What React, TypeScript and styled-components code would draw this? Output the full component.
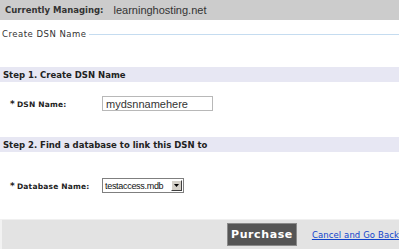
import styled, { createGlobalStyle } from "styled-components";

const GlobalStyle = createGlobalStyle`
  html, body {
    margin: 0;
    padding: 0;
    background: #ffffff;
  }
  body {
    width: 399px;
    height: 249px;
    overflow: hidden;
    font-family: "DejaVu Sans", Verdana, sans-serif;
    color: #222;
  }
`;

const Page = styled.div`
  display: flex;
  flex-direction: column;
  width: 399px;
  height: 249px;
`;

const ManagingBar = styled.div`
  display: flex;
  align-items: center;
  height: 20px;
  padding-left: 5px;
  background: #cccccc;
  font-size: 8.5px;
`;

const ManagingLabel = styled.span`
  font-weight: bold;
  color: #333;
  margin-right: 10px;
`;

const Domain = styled.span`
  font-family: "Liberation Sans", Arial, sans-serif;
  font-size: 11px;
  color: #333;
`;

const Legend = styled.div`
  display: flex;
  align-items: center;
  gap: 2px;
  height: 12px;
  margin-top: 8px;
  padding-left: 2px;
  font-size: 8.5px;
  letter-spacing: 0.5px;
  color: #333;

  &::after {
    content: "";
    flex: 1;
    height: 1px;
    background: #c5dcf0;
  }
`;

const StepBar = styled.div<{ $top: number }>`
  display: flex;
  align-items: center;
  height: 15px;
  margin-top: ${({ $top }) => $top}px;
  padding-left: 3px;
  background: #e7e7f3;
  font-size: 8.5px;
  font-weight: bold;
  color: #222;
`;

const FieldRow = styled.div<{ $top: number }>`
  display: grid;
  grid-template-columns: 92px auto;
  align-items: center;
  height: 15px;
  margin-top: ${({ $top }) => $top}px;
  padding-left: 10px;
`;

const FieldLabel = styled.label`
  font-size: 7.5px;
  font-weight: bold;
  letter-spacing: 0.2px;
  color: #222;

  &::before {
    content: "*";
    font-size: 9px;
    margin-right: 2px;
  }
`;

const TextBox = styled.input`
  box-sizing: border-box;
  width: 111px;
  height: 15px;
  padding: 0 3px;
  border: 1px solid #b8b8b8;
  font-family: "Liberation Sans", Arial, sans-serif;
  font-size: 11px;
  color: #333;
  outline: none;
`;

const Select = styled.div`
  display: flex;
  align-items: center;
  box-sizing: border-box;
  width: 82px;
  height: 15px;
  border: 1px solid #7f7f7f;
  background: #fff;
`;

const SelectValue = styled.span`
  flex: 1;
  padding-left: 2px;
  font-family: "Liberation Sans", Arial, sans-serif;
  font-size: 9px;
  letter-spacing: -0.3px;
  color: #111;
`;

const SelectArrow = styled.span`
  display: flex;
  align-items: center;
  justify-content: center;
  width: 11px;
  height: 11px;
  margin-right: 1px;
  background: #d4d0c8;
  border: 1px solid;
  border-color: #fff #404040 #404040 #fff;
  box-sizing: border-box;
`;

const Footer = styled.div`
  display: flex;
  align-items: center;
  justify-content: flex-end;
  gap: 15px;
  margin-top: auto;
  height: 29px;
  border-top: 1px solid #f0f0f0;
  border-left: 2px solid #f2f2f2;
  background: #e3e3e3;
`;

const PurchaseButton = styled.button`
  height: 23px;
  padding: 0 3px;
  border: 1px solid #8a8a8a;
  background: #555555;
  color: #fff;
  font-family: "DejaVu Sans", Verdana, sans-serif;
  font-size: 11px;
  font-weight: bold;
  letter-spacing: 0.6px;
`;

const CancelLink = styled.a`
  font-family: "DejaVu Sans", Verdana, sans-serif;
  font-size: 8.5px;
  letter-spacing: 0.1px;
  color: #1144cc;
  text-decoration: underline;
`;

export default function App() {
  return (
    <>
      <GlobalStyle />
      <Page>
        <ManagingBar>
          <ManagingLabel>Currently Managing:</ManagingLabel>
          <Domain>learninghosting.net</Domain>
        </ManagingBar>
        <Legend>Create DSN Name</Legend>
        <StepBar $top={27}>Step 1. Create DSN Name</StepBar>
        <FieldRow $top={14}>
          <FieldLabel>DSN Name:</FieldLabel>
          <TextBox defaultValue="mydsnnamehere" />
        </FieldRow>
        <StepBar $top={26}>Step 2. Find a database to link this DSN to</StepBar>
        <FieldRow $top={26}>
          <FieldLabel>Database Name:</FieldLabel>
          <Select>
            <SelectValue>testaccess.mdb</SelectValue>
            <SelectArrow>
              <svg width="5" height="3" viewBox="0 0 5 3">
                <path d="M0 0h5L2.5 3z" fill="#000" />
              </svg>
            </SelectArrow>
          </Select>
        </FieldRow>
        <Footer>
          <PurchaseButton>Purchase</PurchaseButton>
          <CancelLink href="#">Cancel and Go Back</CancelLink>
        </Footer>
      </Page>
    </>
  );
}
